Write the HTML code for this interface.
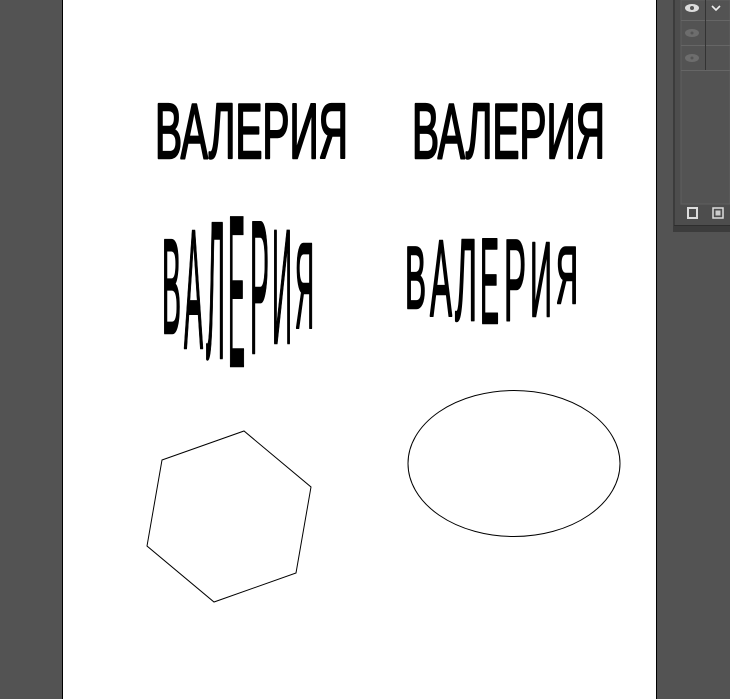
<!DOCTYPE html>
<html><head><meta charset="utf-8"><style>
html,body{margin:0;padding:0;width:730px;height:699px;overflow:hidden;background:#535353}
svg{display:block}
text{font-family:"Liberation Sans Narrow","Liberation Sans",sans-serif;font-weight:normal;fill:#000;stroke:#000;stroke-width:2.5;stroke-linejoin:round}
</style></head><body>
<svg width="730" height="699" viewBox="0 0 730 699">
<rect x="0" y="0" width="730" height="699" fill="#535353"/>
<rect x="62" y="0" width="595" height="699" fill="#000"/>
<rect x="63" y="0" width="593" height="699" fill="#fff"/>
<!-- panel -->
<rect x="673" y="0" width="57" height="232" fill="#3c3c3c"/>
<rect x="675" y="0" width="55" height="226" fill="#4d4d4d"/>
<rect x="674" y="225" width="56" height="1" fill="#2e2e2e"/>
<rect x="681" y="0" width="49" height="204" fill="#535353" stroke="#5f5f5f" stroke-width="1"/>
<line x1="681" y1="20.5" x2="730" y2="20.5" stroke="#666"/>
<line x1="681" y1="45.5" x2="730" y2="45.5" stroke="#666"/>
<line x1="681" y1="70.5" x2="730" y2="70.5" stroke="#666"/>
<line x1="705.5" y1="0" x2="705.5" y2="70" stroke="#333"/>
<g fill="#ddd"><ellipse cx="692" cy="8" rx="7" ry="4"/></g><circle cx="692" cy="8" r="2" fill="#555"/>
<g fill="#6d6d6d"><ellipse cx="692" cy="33" rx="7" ry="4"/><ellipse cx="692" cy="58" rx="7" ry="4"/></g>
<circle cx="692" cy="33" r="1.5" fill="#555"/><circle cx="692" cy="58" r="1.5" fill="#555"/>
<path d="M712 6 L716 10 L720 6" stroke="#eee" stroke-width="1.6" fill="none"/>
<rect x="688" y="208" width="9" height="10" fill="none" stroke="#ddd" stroke-width="2"/>
<rect x="713" y="208" width="10" height="10" fill="none" stroke="#ddd" stroke-width="1.5"/>
<rect x="715.5" y="210.5" width="5" height="5" fill="#ccc"/>
<!-- text 1 & 2 -->
<text x="155" y="158" font-size="78" textLength="193" lengthAdjust="spacingAndGlyphs">ВАЛЕРИЯ</text>
<text x="412" y="158" font-size="78" textLength="193" lengthAdjust="spacingAndGlyphs">ВАЛЕРИЯ</text>
<!-- text 3 bulge -->
<text x="162" y="333" font-size="135" textLength="19" lengthAdjust="spacingAndGlyphs">В</text>
<text x="184" y="348" font-size="170" textLength="19" lengthAdjust="spacingAndGlyphs">А</text>
<text x="206" y="358" font-size="196" textLength="19" lengthAdjust="spacingAndGlyphs">Л</text>
<text x="228" y="366" font-size="216" textLength="17" lengthAdjust="spacingAndGlyphs">Е</text>
<text x="250" y="353" font-size="190" textLength="19" lengthAdjust="spacingAndGlyphs">Р</text>
<text x="272" y="343" font-size="163" textLength="20" lengthAdjust="spacingAndGlyphs">И</text>
<text x="295" y="328" font-size="122" textLength="19" lengthAdjust="spacingAndGlyphs">Я</text>
<!-- text 4 -->
<text x="405" y="308" font-size="88" textLength="21" lengthAdjust="spacingAndGlyphs">В</text>
<text x="430" y="316" font-size="109" textLength="22" lengthAdjust="spacingAndGlyphs">А</text>
<text x="455" y="320" font-size="116" textLength="22" lengthAdjust="spacingAndGlyphs">Л</text>
<text x="480" y="323" font-size="122" textLength="19" lengthAdjust="spacingAndGlyphs">Е</text>
<text x="504" y="320" font-size="116" textLength="22" lengthAdjust="spacingAndGlyphs">Р</text>
<text x="530" y="316" font-size="106" textLength="22" lengthAdjust="spacingAndGlyphs">И</text>
<text x="556" y="303" font-size="81" textLength="22" lengthAdjust="spacingAndGlyphs">Я</text>
<!-- shapes -->
<polygon points="162,460 244,431 311,487 296,573 214,602 147,546" fill="none" stroke="#000" stroke-width="1"/>
<ellipse cx="514" cy="463.5" rx="106" ry="73" fill="none" stroke="#000" stroke-width="1"/>
</svg>
</body></html>
